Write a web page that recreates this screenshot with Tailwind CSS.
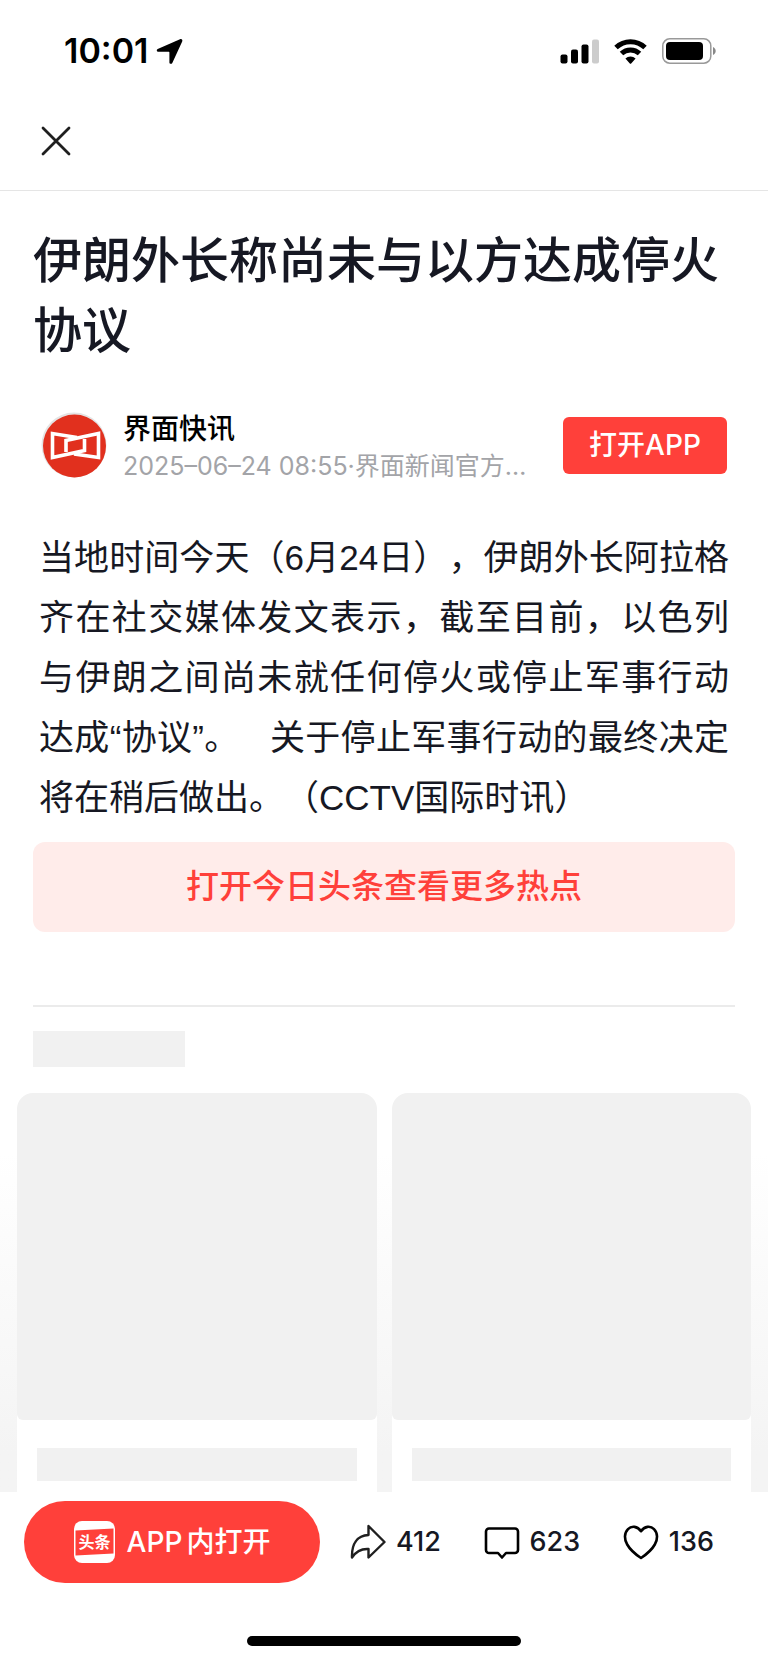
<!DOCTYPE html>
<html lang="zh-CN">

<head>
    <meta charset="UTF-8" />
    <meta name="viewport" content="width=device-width, initial-scale=1.0" />
    <title>伊朗外长称尚未与以方达成停火协议</title>
    <script src="https://cdn.jsdelivr.net/npm/@tailwindcss/browser@4"></script>
</head>

<body class="bg-white text-[#161823] font-['Inter','Noto_Sans_CJK_SC',sans-serif]">

    <!-- Status bar -->
    <div class="flex items-center justify-between pt-8 pl-16 pr-[51px] text-black">
        <div class="flex items-center gap-2">
            <span class="text-[34px] leading-[38px] font-semibold">10:01</span>
            <svg class="w-[27px] h-[27px]" viewBox="0 0 27 27" fill="currentColor">
                <path d="M24 1.2C25.6.5 26.900 1.800 26.200 3.400L16.300 25c-.6 1.300-2.900 1.100-2.900-.6V14.400c0-.4-.2-.6-.6-.6H2.200C.5 13.800.200 11.600 1.700 11z" />
            </svg>
        </div>
        <div class="flex items-center gap-[15px]">
            <svg class="w-[39px] h-[25px]" viewBox="0 0 39 25" fill="currentColor">
                <rect x="0.500" y="15.500" width="7" height="9" rx="2" />
                <rect x="11" y="10.500" width="7" height="14" rx="2" />
                <rect x="21.500" y="5.500" width="7" height="19" rx="2" />
                <rect x="32" y="0.500" width="7" height="24" rx="2" fill="#cccccc" />
            </svg>
            <svg class="w-[33px] h-[25px]" viewBox="0 0 33 25" fill="none" stroke="currentColor" stroke-width="5">
                <path d="M2 8.500a21 21 0 0 1 29 0" />
                <path d="M7.500 14.500a13 13 0 0 1 18 0" />
                <path stroke="none" fill="currentColor" d="M11.400 19.500a7.500 7.500 0 0 1 10.200 0l-4.200 4.700a1.200 1.200 0 0 1-1.800 0z" />
            </svg>
            <svg class="w-[55px] h-[26px]" viewBox="0 0 55 26" fill="none">
                <rect x="0.800" y="0.800" width="48" height="24.400" rx="7" stroke="#999999" stroke-width="1.500" />
                <rect x="4" y="4" width="37" height="18" rx="4" fill="#000000" />
                <path d="M51 9v8c3.600-1.500 3.600-6.500 0-8z" fill="#888888" />
            </svg>
        </div>
    </div>

    <!-- Nav -->
    <header class="flex items-center h-[121px] pt-[22px] px-10 border-b border-[#e5e5e5]">
        <button type="button" aria-label="关闭">
            <svg class="w-8 h-8" viewBox="0 0 32 32" fill="none" stroke="#1f1f1f" stroke-width="2.800" stroke-linecap="round">
                <path d="M3 3l26 26M29 3l-26 26" />
            </svg>
        </button>
    </header>

    <main>
        <article class="px-[33px] pt-[35px]">
            <h1 class="text-[49px] leading-[70px] font-medium">伊朗外长称尚未与以方达成停火协议</h1>

            <div class="flex items-center mt-10 px-2">
                <svg class="w-[66px] h-[66px] shrink-0" viewBox="0 0 66 66" fill="none">
                    <circle cx="33" cy="33" r="32.500" fill="#e4e4e4" />
                    <circle cx="33.500" cy="34" r="31.500" fill="#e1301e" />
                    <g stroke="#ffffff" stroke-width="3.600">
                        <path d="M36 25.500L11.500 21.500V45.500L43.500 38.500V27" />
                        <path d="M33 42L57.500 45.500V21.500L25 28.500V40" />
                    </g>
                </svg>
                <div class="flex-1 min-w-0 mt-1 ml-4">
                    <p class="text-[28px] leading-[38px] font-medium text-black">界面快讯</p>
                    <p class="whitespace-nowrap text-[25px] leading-[36px] text-[#a3a4a8]">2025–06–24 08:55·界面新闻官方…</p>
                </div>
                <button type="button" class="w-[164px] h-[57px] shrink-0 rounded-md bg-[#ff403a] text-[28px] leading-none font-medium text-white">打开APP</button>
            </div>

            <p class="mt-11 px-[6px] text-[35px] leading-[60px] text-justify [text-spacing-trim:space-all] font-['Liberation_Sans','Noto_Sans_CJK_SC',sans-serif]">当地时间今天（6月24日），伊朗外长阿拉格齐在社交媒体发文表示，截至目前，以色列与伊朗之间尚未就任何停火或停止军事行动达成“协议”。&nbsp;&nbsp;&nbsp;关于停止军事行动的最终决定将在稍后做出。（CCTV国际时讯）</p>

            <button type="button" class="block w-full h-[90px] mt-[14px] rounded-xl bg-[#ffecea] text-[33px] font-medium text-[#ff403a]">打开今日头条查看更多热点</button>

            <hr class="mt-[73px] border-t-2 border-[#ebebeb]" />
            <div class="w-[152px] h-9 mt-6 bg-[#f1f1f1]"></div>
        </article>

        <!-- Related cards, still loading -->
        <section class="mt-[26px] grid grid-cols-2 gap-[15px] px-[17px] bg-linear-to-b from-white from-15% to-[#f4f4f4] to-90%">
            <div class="rounded-t-2xl bg-white pb-[11px]">
                <div class="h-[327px] rounded-t-2xl rounded-b-md bg-[#f1f1f1]"></div>
                <div class="h-[33px] mt-[28px] mx-5 bg-[#f1f1f1]"></div>
            </div>
            <div class="rounded-t-2xl bg-white pb-[11px]">
                <div class="h-[327px] rounded-t-2xl rounded-b-md bg-[#f1f1f1]"></div>
                <div class="h-[33px] mt-[28px] mx-5 bg-[#f1f1f1]"></div>
            </div>
        </section>
    </main>

    <!-- Bottom bar -->
    <footer class="pt-[9px] pb-[17px]">
        <div class="flex items-center pl-6 pr-[54px]">
            <button type="button" class="flex items-center justify-center gap-3 w-[296px] h-[82px] rounded-full bg-[#ff403a] text-white">
                <svg class="w-[41px] h-[42px]" viewBox="0 0 41 42">
                    <rect width="41" height="42" rx="8" fill="#ffffff" />
                    <path d="M1.500 9.500L39.500 7.500V32.500L1.500 34.500z" fill="#ff403a" />
                    <text x="20.500" y="27" text-anchor="middle" font-size="16" font-weight="700" fill="#ffffff" font-family="Noto Sans CJK SC, sans-serif">头条</text>
                </svg>
                <span class="flex gap-1 text-[28px] font-medium"><span>APP</span><span>内打开</span></span>
            </button>
            <div class="flex flex-1 justify-between pl-[30px] text-[27px] font-medium">
                <button type="button" class="flex items-center gap-[10px]">
                    <svg class="w-9 h-9" viewBox="0 0 36 36" fill="none" stroke="#1f1f1f" stroke-width="2.400" stroke-linejoin="round">
                        <path d="M18.500 2L34.500 18L18.500 33.500V25C11 24.500 6 27.500 2 33.500C1.500 20 7 11.500 18.500 11z" />
                    </svg>
                    <span>412</span>
                </button>
                <button type="button" class="flex items-center gap-[10px]">
                    <svg class="w-9 h-9" viewBox="0 0 36 36" fill="none" stroke="#000000" stroke-width="2.600" stroke-linejoin="round">
                        <path d="M5 4.500H31A3 3 0 0 1 34 7.500V26A3 3 0 0 1 31 29H22L18 33.500L14 29H5A3 3 0 0 1 2 26V7.500A3 3 0 0 1 5 4.500z" />
                    </svg>
                    <span>623</span>
                </button>
                <button type="button" class="flex items-center gap-[10px]">
                    <svg class="w-9 h-9" viewBox="0 0 36 36" fill="none" stroke="#000000" stroke-width="2.600" stroke-linejoin="round">
                        <path d="M18 7.200C14.500 2 8.500 1.500 5 5.200C1 9.300 1.200 15.500 4.200 20.500C7 25.500 12 30 18 34C24 30 29 25.500 31.800 20.500C34.800 15.500 35 9.300 31 5.200C27.500 1.500 21.500 2 18 7.200z" />
                    </svg>
                    <span>136</span>
                </button>
            </div>
        </div>
        <div class="w-[274px] h-[10px] mt-[53px] mx-auto rounded-full bg-black"></div>
    </footer>

</body>

</html>
